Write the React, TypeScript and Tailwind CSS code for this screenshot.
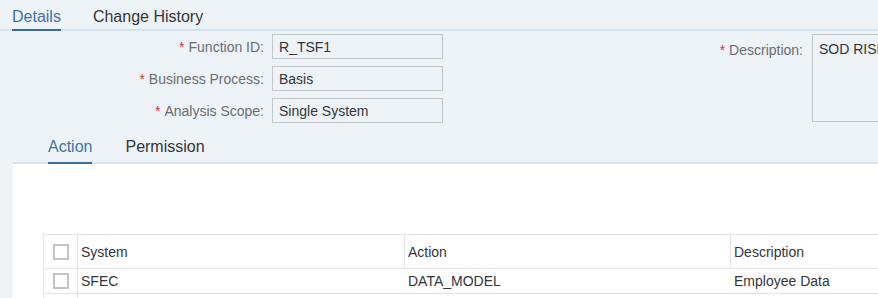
const font = { fontFamily: '"Liberation Sans", Arial, sans-serif' };

function Label({ text, required }: { text: string; required?: boolean }) {
  return (
    <span className="text-sm text-[#6a6d70] whitespace-nowrap">
      {required && <span className="text-[#d9383f] mr-1">*</span>}
      {text}:
    </span>
  );
}

function Field({ label, value, required }: { label: string; value: string; required?: boolean }) {
  return (
    <div className="flex items-center h-[25px]">
      <div className="w-[264px] text-right">
        <Label text={label} required={required} />
      </div>
      <div className="ml-2 w-[171px] h-[25px] border border-[#c3c6c9] px-[6px] flex items-center text-sm text-[#32363a]">
        {value}
      </div>
    </div>
  );
}

function Checkbox() {
  return <div className="w-4 h-4 border-2 border-[#c4c4c4] bg-white" />;
}

export default function App() {
  return (
    <div className="w-[878px] h-[298px] overflow-hidden bg-[#eef3f8] text-[#32363a]" style={font}>
      {/* top tabs */}
      <div className="flex h-[31px] border-b-2 border-[#d3e2f0] pl-3">
        <div className="relative pt-[5px] text-base text-[#3f74a3]">
          Details
          <div className="absolute left-0 right-0 bottom-[-2px] h-[2px] bg-[#3b6a94]" />
        </div>
        <div className="ml-8 pt-[5px] text-base text-[#32363a]">Change History</div>
      </div>

      {/* form */}
      <div className="flex pt-[3px]">
        <div className="flex flex-col gap-[7px] w-[443px]">
          <Field label="Function ID" value="R_TSF1" required />
          <Field label="Business Process" value="Basis" required />
          <Field label="Analysis Scope" value="Single System" required />
        </div>
        <div className="flex items-start">
          <div className="w-[360px] text-right pt-[4px]">
            <Label text="Description" required />
          </div>
          <div className="ml-[9px] w-[200px] h-[88px] border border-[#c3c6c9] px-[6px] pt-[4px] text-sm text-[#32363a] whitespace-nowrap overflow-hidden">
            SOD RISK
          </div>
        </div>
      </div>

      {/* sub tabs + panel */}
      <div className="ml-[13px] mt-[8px]">
        <div className="flex h-[33px] border-b-2 border-[#d3e2f0] pl-[35px]">
          <div className="relative pt-[4px] text-base text-[#3f74a3]">
            Action
            <div className="absolute left-0 right-0 bottom-[-2px] h-[2px] bg-[#3b6a94]" />
          </div>
          <div className="ml-[33px] pt-[4px] text-base text-[#32363a]">Permission</div>
        </div>
        <div className="bg-white pl-[30px] pt-[70px] h-[200px]">
          <div className="border-l border-t border-[#e5e5e5] text-sm">
            <div className="flex h-[34px] border-b border-[#e5e5e5]">
              <div className="w-[34px] flex items-center justify-center border-r border-[#e5e5e5]">
                <Checkbox />
              </div>
              <div className="w-[327px] flex items-center px-[3px] border-r border-[#e5e5e5]">System</div>
              <div className="w-[326px] flex items-center px-[3px] border-r border-[#e5e5e5]">Action</div>
              <div className="flex-1 flex items-center px-[3px]">Description</div>
            </div>
            <div className="flex h-[25px] border-b border-[#e5e5e5]">
              <div className="w-[34px] flex items-center justify-center border-r border-[#e5e5e5]">
                <Checkbox />
              </div>
              <div className="w-[327px] flex items-center px-[3px]">SFEC</div>
              <div className="w-[326px] flex items-center px-[3px]">DATA_MODEL</div>
              <div className="flex-1 flex items-center px-[3px]">Employee Data</div>
            </div>
            <div className="flex h-[25px]">
              <div className="w-[34px] flex items-start pt-[4px] justify-center border-r border-[#e5e5e5]">
                <Checkbox />
              </div>
            </div>
          </div>
        </div>
      </div>
    </div>
  );
}
